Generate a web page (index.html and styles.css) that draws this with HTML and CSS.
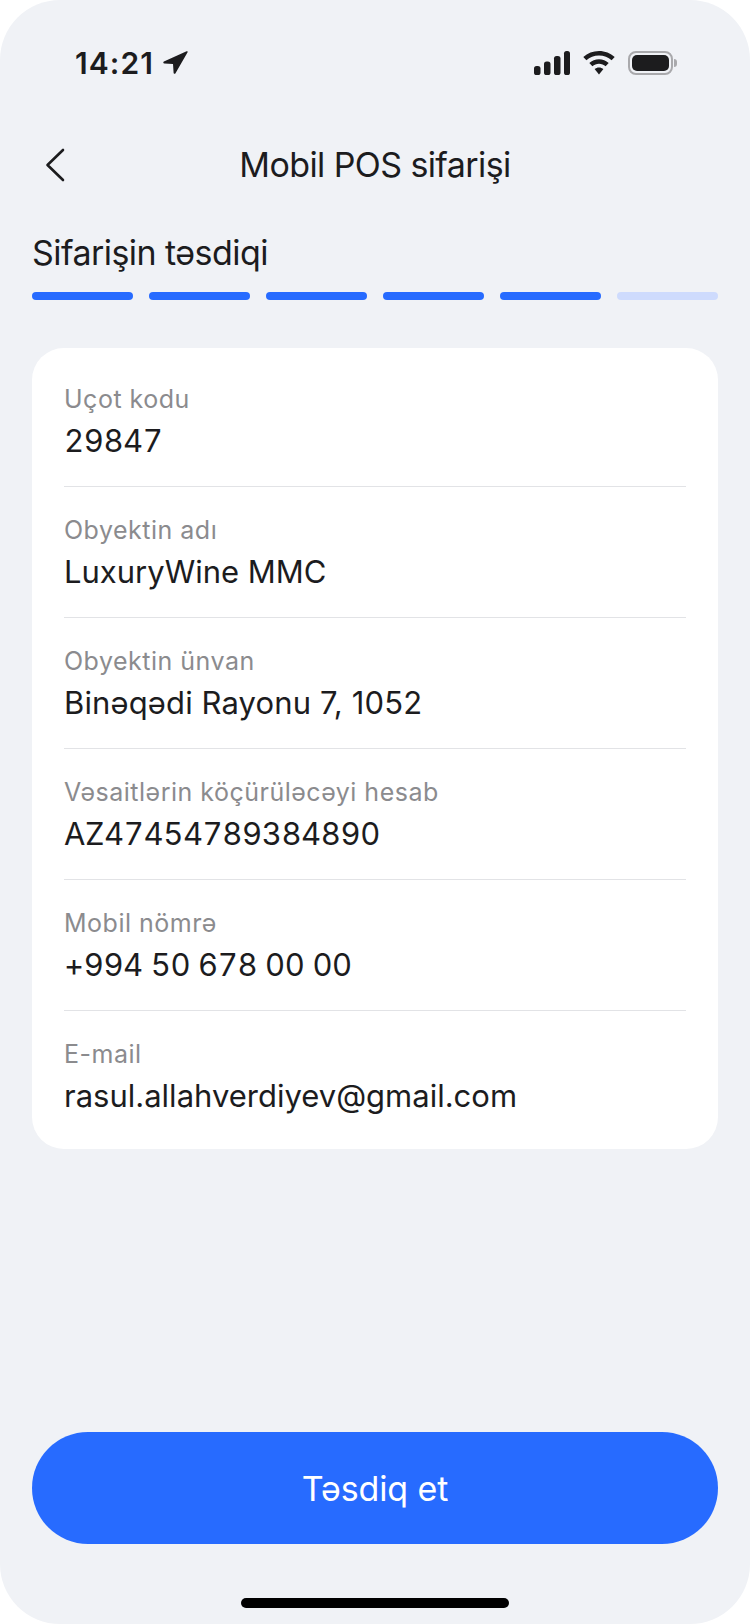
FILE: index.html
```html
<!DOCTYPE html>
<html lang="en">
<head>
  <meta charset="utf-8">
  <title>Mobil POS sifarişi</title>
  <link rel="stylesheet" href="styles.css">
</head>
<body>

<div class="screen">
  <div class="status">
    <div class="clock">
      <span>14:21</span>
      <svg class="arrow" width="26" height="26" viewBox="0 0 26 26"><path d="M24.600 1.300 1.900 11.600c-1 .5-.7 1.900.4 1.900l8.700.6.600 8.700c0 1.100 1.500 1.400 1.900.4L25.600 2.300c.3-.7-.3-1.300-1-1Z" fill="#1c1c1e"/></svg>
    </div>
    <div class="status-icons">
      <svg width="36" height="24" viewBox="0 0 36 24" fill="#1c1c1e">
        <rect x="0" y="15" width="6.500" height="9" rx="2.600"/>
        <rect x="10" y="10.500" width="6.500" height="13.500" rx="2.600"/>
        <rect x="20" y="5" width="6.500" height="19" rx="2.600"/>
        <rect x="30" y="0" width="6" height="24" rx="2.600"/>
      </svg>
      <svg width="32" height="24" viewBox="0 0 32 24" fill="#1c1c1e">
        <path d="M16 0c6 0 11.500 2.300 15.700 6.100l-3.100 3.200C25.300 6.300 20.900 4.500 16 4.500S6.700 6.300 3.400 9.300L.3 6.100C4.500 2.300 10 0 16 0Z"/>
        <path d="M16 8.300c3.700 0 7.100 1.400 9.700 3.700l-3.100 3.200c-1.800-1.500-4.100-2.400-6.600-2.400s-4.800.9-6.600 2.400L6.300 12c2.600-2.300 6-3.700 9.700-3.700Z"/>
        <path d="M16 16.500c1.700 0 3.200.6 4.400 1.600L16 23.500l-4.400-5.400c1.200-1 2.700-1.600 4.400-1.600Z"/>
      </svg>
      <div class="battery"><div class="battery-fill"></div></div>
    </div>
  </div>

  <header class="topbar">
    <svg class="back" width="20" height="34" viewBox="0 0 20 34"><path d="M18 2 2.500 17 18 32" fill="none" stroke="#1c1c1e" stroke-width="2.600" stroke-linecap="round" stroke-linejoin="round"/></svg>
    <h1>Mobil POS sifarişi</h1>
  </header>

  <div class="steps">
    <h2>Sifarişin təsdiqi</h2>
    <div class="progress">
      <span class="on"></span>
      <span class="on"></span>
      <span class="on"></span>
      <span class="on"></span>
      <span class="on"></span>
      <span></span>
    </div>
  </div>

  <div class="card">
    <div class="row">
      <div class="lbl">Uçot kodu</div>
      <div class="val num">29847</div>
    </div>
    <div class="row">
      <div class="lbl">Obyektin adı</div>
      <div class="val">LuxuryWine MMC</div>
    </div>
    <div class="row">
      <div class="lbl">Obyektin ünvan</div>
      <div class="val addr">Binəqədi Rayonu 7, 1052</div>
    </div>
    <div class="row">
      <div class="lbl">Vəsaitlərin köçürüləcəyi hesab</div>
      <div class="val num">AZ47454789384890</div>
    </div>
    <div class="row">
      <div class="lbl">Mobil nömrə</div>
      <div class="val num">+994 50 678 00 00</div>
    </div>
    <div class="row">
      <div class="lbl">E-mail</div>
      <div class="val">rasul.allahverdiyev@gmail.com</div>
    </div>
  </div>

  <button class="confirm">Təsdiq et</button>
  <div class="home"></div>
</div>

</body>
</html>
```

FILE: styles.css
```css
:root { --bg:#f0f2f6; --ink:#1c1c1e; --blue:#276bff; --pale:#cedbfd; --grey:#8b8b8e; --line:#e2e3e6; }
body{margin:0;background:#fff;font-family:Inter,"Noto Sans",sans-serif;color:var(--ink)}
.screen{width:750px;height:1624px;background:var(--bg);border-radius:60px;
        display:flex;flex-direction:column;overflow:hidden}

.status{display:flex;justify-content:space-between;align-items:center;
        height:30px;padding:48px 77px 0 75px}
.clock{display:flex;align-items:center;gap:8px;font-size:30px;font-weight:600;letter-spacing:1.100px}
.status-icons{display:flex;align-items:center;gap:13px}
.battery{width:45px;height:24px;border:2px solid #a9a9ac;border-radius:8px;padding:2px;
         box-sizing:border-box;position:relative}
.battery::after{content:"";position:absolute;left:44px;top:6px;width:3px;height:8px;
                background:#a9a9ac;border-radius:0 3px 3px 0}
.battery-fill{height:100%;background:var(--ink);border-radius:5px}

.topbar{display:flex;align-items:center;justify-content:center;position:relative;
        height:46px;margin-top:64px}
.topbar h1{margin:0;font-size:34px;font-weight:400;line-height:46px;letter-spacing:-.6px}
.back{position:absolute;left:45px;top:6px}

.steps{padding:0 32px;margin-top:42px}
.steps h2{margin:0;font-size:34px;font-weight:400;line-height:46px;letter-spacing:-.55px}
.progress{display:flex;gap:16px;margin-top:16px}
.progress span{flex:1;height:8px;border-radius:4px;background:var(--pale)}
.progress span.on{background:var(--blue)}

.card{margin:48px 32px 0;padding:0 32px;background:#fff;border-radius:32px}
.row{height:131px;box-sizing:border-box;padding-top:28px;border-bottom:1px solid var(--line)}
.row:first-child{height:139px;padding-top:36px}
.row:last-child{border-bottom:0;height:138px}
.lbl{font-size:25px;line-height:30px;color:var(--grey);letter-spacing:.5px}
.val{font-size:31px;line-height:40px;margin-top:7px}
.val.num{font-variant-numeric:tabular-nums;letter-spacing:-.4px}
.val.addr{letter-spacing:.13px}

.confirm{margin:auto 32px 0;height:112px;border:none;border-radius:56px;background:var(--blue);
         color:#fff;font:400 34px Inter,sans-serif;letter-spacing:-.1px}
.home{width:268px;height:10px;border-radius:5px;background:#000;margin:54px auto 16px}
```
